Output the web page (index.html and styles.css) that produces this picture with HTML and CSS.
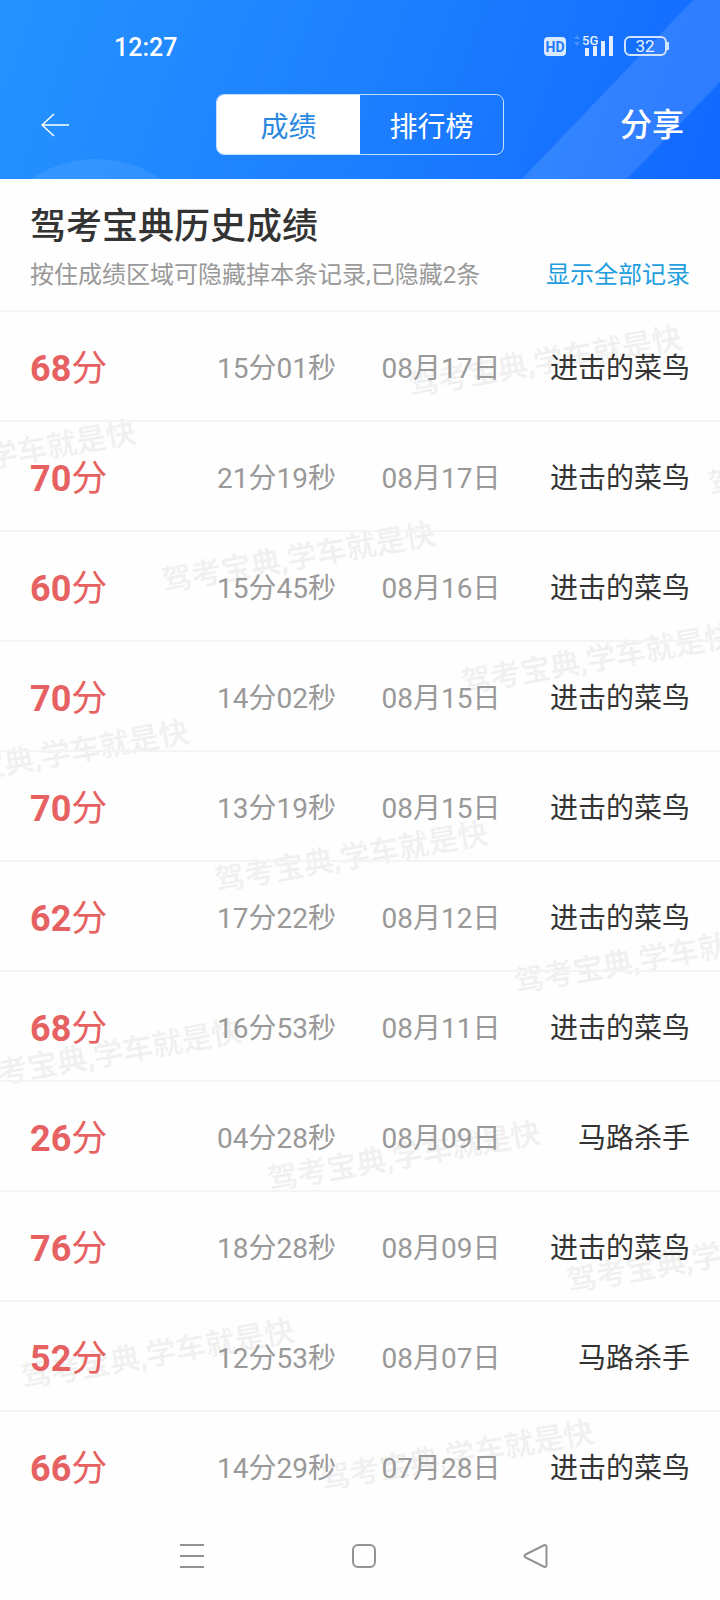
FILE: index.html
```html
<!DOCTYPE html>
<html lang="zh-CN">
<head>
<meta charset="utf-8">
<meta name="viewport" content="width=device-width, initial-scale=1">
<title>驾考宝典历史成绩</title>
<link rel="stylesheet" href="styles.css">
</head>
<body>
<header class="header">
  <svg class="header-circle" width="232" height="20" viewBox="0 0 232 20" aria-hidden="true"><circle cx="116" cy="116" r="116" fill="#fff" fill-opacity=".08"/></svg>
  <svg class="header-band" width="200" height="180" viewBox="0 0 200 180" aria-hidden="true"><path d="M173 0H200V82L106 180H1Z" fill="#fff" fill-opacity=".12"/></svg>
  <div class="status">
    <time class="clock">12:27</time>
    <svg class="status-icons" width="126" height="24" viewBox="0 0 126 24" role="img" aria-label="HD 5G 32">
      <rect x="0" y="2" width="22" height="19" rx="4" fill="#d8eaff"/>
      <text x="11" y="17" class="hd">HD</text>
      <path d="M30 4l3-4 3 4zM30 7l3 4 3-4z" fill="#4a91ff"/>
      <text x="38" y="10" class="net">5G</text>
      <path d="M41 13h4v8h-4zM49 11h4v10h-4zM57 6h4v15h-4zM65 1h4v20h-4z" fill="#e0edff"/>
      <rect x="81" y="2" width="41" height="18" rx="5" fill="none" stroke="#d0e4ff" stroke-width="2"/>
      <path d="M124 7v8" stroke="#d0e4ff" stroke-width="2"/>
      <text x="101" y="17" class="battery">32</text>
    </svg>
  </div>
  <div class="bar">
    <button class="back" type="button" aria-label="返回"><svg width="28" height="24" viewBox="0 0 28 24"><path d="M13 1L1 12L13 23M1 12H28" fill="none" stroke="#fff" stroke-width="1.5"/></svg></button>
    <div class="tabs">
      <button class="tab tab-on" type="button">成绩</button>
      <button class="tab" type="button">排行榜</button>
    </div>
    <button class="share" type="button">分享</button>
  </div>
</header>
<main class="main">
  <section class="intro">
    <h1 class="title">驾考宝典历史成绩</h1>
    <div class="hint">
      <span>按住成绩区域可隐藏掉本条记录,已隐藏2条</span>
      <a class="all" href="#all">显示全部记录</a>
    </div>
  </section>
  <div class="records">
    <svg class="watermark" aria-hidden="true">
      <g transform="rotate(-10)">
        <text x="390" y="154">驾考宝典,学车就是快</text>
        <text x="667" y="304">驾考宝典,学车就是快</text>
        <text x="-164" y="152">驾考宝典,学车就是快</text>
        <text x="113" y="304">驾考宝典,学车就是快</text>
        <text x="390" y="456">驾考宝典,学车就是快</text>
        <text x="-164" y="456">驾考宝典,学车就是快</text>
        <text x="113" y="608">驾考宝典,学车就是快</text>
        <text x="390" y="760">驾考宝典,学车就是快</text>
        <text x="-164" y="760">驾考宝典,学车就是快</text>
        <text x="113" y="912">驾考宝典,学车就是快</text>
        <text x="390" y="1064">驾考宝典,学车就是快</text>
        <text x="-164" y="1064">驾考宝典,学车就是快</text>
        <text x="113" y="1216">驾考宝典,学车就是快</text>
      </g>
    </svg>
    <table class="table">
      <tbody>
        <tr><td class="score"><b>68</b>分</td><td class="used">15分01秒</td><td class="date">08月17日</td><td class="rank">进击的菜鸟</td></tr>
        <tr><td class="score"><b>70</b>分</td><td class="used">21分19秒</td><td class="date">08月17日</td><td class="rank">进击的菜鸟</td></tr>
        <tr><td class="score"><b>60</b>分</td><td class="used">15分45秒</td><td class="date">08月16日</td><td class="rank">进击的菜鸟</td></tr>
        <tr><td class="score"><b>70</b>分</td><td class="used">14分02秒</td><td class="date">08月15日</td><td class="rank">进击的菜鸟</td></tr>
        <tr><td class="score"><b>70</b>分</td><td class="used">13分19秒</td><td class="date">08月15日</td><td class="rank">进击的菜鸟</td></tr>
        <tr><td class="score"><b>62</b>分</td><td class="used">17分22秒</td><td class="date">08月12日</td><td class="rank">进击的菜鸟</td></tr>
        <tr><td class="score"><b>68</b>分</td><td class="used">16分53秒</td><td class="date">08月11日</td><td class="rank">进击的菜鸟</td></tr>
        <tr><td class="score"><b>26</b>分</td><td class="used">04分28秒</td><td class="date">08月09日</td><td class="rank">马路杀手</td></tr>
        <tr><td class="score"><b>76</b>分</td><td class="used">18分28秒</td><td class="date">08月09日</td><td class="rank">进击的菜鸟</td></tr>
        <tr><td class="score"><b>52</b>分</td><td class="used">12分53秒</td><td class="date">08月07日</td><td class="rank">马路杀手</td></tr>
        <tr><td class="score"><b>66</b>分</td><td class="used">14分29秒</td><td class="date">07月28日</td><td class="rank">进击的菜鸟</td></tr>
      </tbody>
    </table>
  </div>
</main>
<nav class="nav">
  <button class="key" type="button" aria-label="菜单"><svg width="26" height="26" viewBox="0 0 26 26"><path d="M1 2H25M1 13H25M1 24H25"/></svg></button>
  <button class="key" type="button" aria-label="主页"><svg width="26" height="26" viewBox="0 0 26 26"><rect x="2" y="2" width="22" height="22" rx="5"/></svg></button>
  <button class="key" type="button" aria-label="后退"><svg width="26" height="26" viewBox="0 0 26 26"><path d="M2.500 11.500L21 2.300Q23.500 1.500 23.500 4V22Q23.500 24.500 21 23.700L2.500 14.500Q.5 13 2.500 11.500Z"/></svg></button>
</nav>
</body>
</html>
```
FILE: styles.css
```css
* { box-sizing: border-box; }
body {
  margin: 0;
  background: #fefefe;
  color: #333;
  font-family: Roboto, "Noto Sans CJK SC", sans-serif;
  font-size: 28px;
}
button {
  margin: 0;
  padding: 0;
  border: 0;
  background: none;
  color: inherit;
  font: inherit;
}
svg { display: block; }
.header {
  position: relative;
  overflow: hidden;
  padding-bottom: 24px;
  background: linear-gradient(110deg, #2593ff 0%, #1d80ff 50%, #1168ff 100%);
  color: #fff;
}
.header-circle { position: absolute; left: -20px; bottom: 0; }
.header-band { position: absolute; right: 0; top: 0; }
.status {
  position: relative;
  display: flex;
  justify-content: space-between;
  align-items: center;
  height: 94px;
  padding: 0 50px 0 114px;
}
.clock { font-size: 25px; font-weight: 500; }
.hd { font-size: 14px; font-weight: 700; text-anchor: middle; fill: #2579ff; }
.net { font-size: 13px; font-weight: 500; fill: #e0edff; }
.battery { font-size: 17px; text-anchor: middle; fill: #e8f2ff; }
.bar {
  position: relative;
  display: grid;
  grid-template-columns: 1fr 288px 1fr;
  align-items: center;
  padding: 0 36px;
}
.back { justify-self: start; padding-left: 5px; }
.tabs {
  display: grid;
  grid-template-columns: 1fr 1fr;
  height: 61px;
  border: 1px solid #c4dfff;
  border-radius: 8px;
  overflow: hidden;
}
.tab-on { background: #fff; color: #2a87e0; }
.share { justify-self: end; font-size: 32px; font-weight: 500; line-height: 32px; }
.intro {
  padding: 22px 30px 13px;
  border-bottom: 2px solid #f3f4f4;
}
.title {
  margin: 0;
  font-size: 36px;
  font-weight: 500;
  line-height: 52px;
}
.hint {
  display: flex;
  justify-content: space-between;
  color: #999;
  font-size: 24px;
  line-height: 44px;
}
.all { color: #1f9fe0; text-decoration: none; }
.records { position: relative; overflow: hidden; }
.watermark { position: absolute; left: 0; top: 0; width: 100%; height: 100%; }
.watermark text { font-size: 30px; font-weight: 500; fill: #f0f0f0; }
.table {
  position: relative;
  width: 100%;
  border-collapse: separate;
  border-spacing: 0;
  table-layout: fixed;
}
.table td {
  height: 110px;
  padding: 0;
  border-bottom: 2px solid #f3f4f4;
  white-space: nowrap;
}
.table tr:last-child td { border-bottom-color: transparent; }
.table .score { width: 30%; padding: 0 0 2px 30px; color: #e66161; font-size: 36px; }
.table .used { width: 23%; padding-left: 1px; color: #999; }
.date { width: 20%; color: #999; }
.table .rank { padding-right: 30px; text-align: right; }
.nav {
  display: flex;
  justify-content: center;
  gap: 146px;
  padding: 21px 0 30px 8px;
}
.key svg { fill: none; stroke: #929292; stroke-width: 2; }
```
